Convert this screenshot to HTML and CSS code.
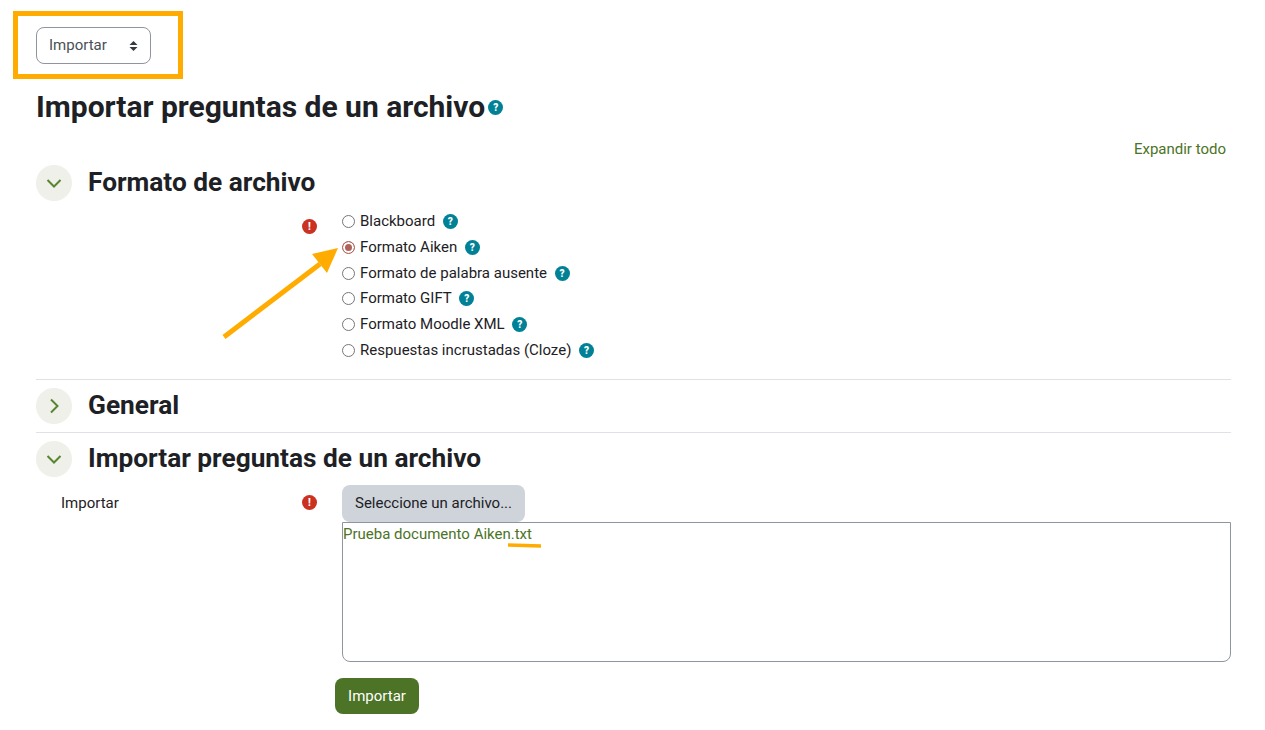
FILE: index.html
```html
<!DOCTYPE html>
<html>
<head>
    <title>Importar preguntas de un archivo</title>
    <meta name="viewport" content="width=device-width, initial-scale=1">
    <link rel="stylesheet" href="styles.css">
</head>
<body>
    <div class="page">
        <div class="select-box">
            <span>Importar</span>
            <svg class="select-arrows" width="9" height="10" viewBox="0 0 9 10"><path d="M4.5 0 L8.5 4 L0.5 4 Z M0.5 6 L8.5 6 L4.5 10 Z" fill="#343a40"/></svg>
        </div>

        <h1 class="page-title">Importar preguntas de un archivo<span class="help help-title">?</span></h1>

        <div class="expand-row"><a href="#">Expandir todo</a></div>

        <section class="section section-first">
            <div class="section-header">
                <span class="toggle"><svg width="16" height="16" viewBox="0 0 16 16"><path d="M1.5 5 L8 11.5 L14.500 5" fill="none" stroke="#5a8530" stroke-width="2"/></svg></span>
                <h2>Formato de archivo</h2>
            </div>
            <div class="form-row form-row-radios">
                <div class="form-label"></div>
                <div class="form-req"><span class="error-icon">!</span></div>
                <div class="radio-list">
                    <label class="radio-row"><input type="radio" name="format">Blackboard<span class="help">?</span></label>
                    <label class="radio-row"><input type="radio" name="format" checked>Formato Aiken<span class="help">?</span></label>
                    <label class="radio-row"><input type="radio" name="format">Formato de palabra ausente<span class="help">?</span></label>
                    <label class="radio-row"><input type="radio" name="format">Formato GIFT<span class="help">?</span></label>
                    <label class="radio-row"><input type="radio" name="format">Formato Moodle XML<span class="help">?</span></label>
                    <label class="radio-row"><input type="radio" name="format">Respuestas incrustadas (Cloze)<span class="help">?</span></label>
                </div>
            </div>
        </section>

        <section class="section">
            <div class="section-header">
                <span class="toggle"><svg width="16" height="16" viewBox="0 0 16 16"><path d="M5 1.500 L11.500 8 L5 14.500" fill="none" stroke="#5a8530" stroke-width="2"/></svg></span>
                <h2>General</h2>
            </div>
        </section>

        <section class="section">
            <div class="section-header">
                <span class="toggle"><svg width="16" height="16" viewBox="0 0 16 16"><path d="M1.5 5 L8 11.5 L14.500 5" fill="none" stroke="#5a8530" stroke-width="2"/></svg></span>
                <h2>Importar preguntas de un archivo</h2>
            </div>
            <div class="form-row form-row-file">
                <div class="form-label">Importar</div>
                <div class="form-req"><span class="error-icon">!</span></div>
                <div class="file-field">
                    <button class="btn-file" type="button">Seleccione un archivo...</button>
                    <div class="file-box"><a href="#">Prueba documento Aiken.txt</a></div>
                </div>
            </div>
        </section>

        <div class="submit-row">
            <button class="btn-submit" type="button">Importar</button>
        </div>
    </div>

    <!-- orange marks drawn over the screenshot -->
    <div class="mark-box"></div>
    <svg class="mark-arrow" width="130" height="105" viewBox="0 0 130 105"><path d="M4 97 L100 24" stroke="#ffab00" stroke-width="5" fill="none"/><path d="M118 8 L92 14 L107 33 Z" fill="#ffab00"/></svg>
    <svg class="mark-underline" width="34" height="6" viewBox="0 0 34 6"><path d="M0 2 L33 3" stroke="#ffab00" stroke-width="3.500" fill="none"/></svg>
</body>
</html>
```

FILE: styles.css
```css
body {
    margin: 0;
    font-family: Roboto, "Liberation Sans", sans-serif;
    font-size: 15px;
    line-height: 22.5px;
    color: #1d2125;
    background-color: #fff;
}
a {
    color: #4c7326;
    text-decoration: none;
}
.page {
    padding: 27px 34px 16px 36px;
}
.select-box {
    display: flex;
    justify-content: space-between;
    align-items: center;
    box-sizing: border-box;
    width: 115px;
    height: 37px;
    padding: 0 12px 0 12px;
    border: 1px solid #8f959e;
    border-radius: 8px;
    color: #495057;
}
.page-title {
    display: flex;
    align-items: center;
    margin: 26px 0 0;
    font-size: 30px;
    line-height: 34px;
    font-weight: 700;
}
.help {
    display: inline-block;
    width: 15px;
    height: 15px;
    margin-left: 7.6px;
    border-radius: 50%;
    background-color: #008196;
    color: #fff;
    font-size: 10px;
    font-weight: 900;
    line-height: 15px;
    text-align: center;
}
.help-title {
    margin-left: 3px;
}
.expand-row {
    margin-top: 14px;
    padding-right: 5px;
    text-align: right;
}
.section {
    border-top: 1px solid #dee2e6;
    padding-top: 8px;
}
.section-first {
    border-top: none;
    padding-top: 0;
    margin-top: 4px;
    padding-bottom: 15.7px;
}
.section-header {
    display: flex;
    align-items: center;
    gap: 16px;
    height: 36px;
    margin-bottom: 8px;
}
.section-header h2 {
    margin: 0 0 2px;
    font-size: 26.25px;
    line-height: 34px;
    font-weight: 700;
}
.toggle {
    display: flex;
    align-items: center;
    justify-content: center;
    width: 36px;
    height: 36px;
    border-radius: 50%;
    background-color: #eef0e9;
}
.form-row {
    display: grid;
    grid-template-columns: 241px 40px 1fr;
    padding-left: 25px;
}
.form-row-radios {
    padding-top: 0.3px;
}
.form-req {
    padding-top: 10px;
}
.form-row-file .form-label {
    padding-top: 7px;
}
.error-icon {
    display: block;
    width: 15px;
    height: 15px;
    border-radius: 50%;
    background-color: #ca3120;
    color: #fff;
    font-size: 10px;
    font-weight: 900;
    line-height: 15px;
    text-align: center;
}
.radio-list {
    display: flex;
    flex-direction: column;
}
.radio-row {
    display: flex;
    align-items: center;
    height: 25.7px;
}
.radio-row input {
    appearance: none;
    box-sizing: border-box;
    width: 13px;
    height: 13px;
    margin: 0 5px 0 0;
    border: 1px solid #767676;
    border-radius: 50%;
}
.radio-row input:checked {
    border-color: #b0625a;
    background-color: #b0625a;
    box-shadow: inset 0 0 0 2px #fff;
}
.file-field {
    display: flex;
    flex-direction: column;
    align-items: flex-start;
}
.btn-file {
    box-sizing: border-box;
    width: 183px;
    height: 37px;
    border: none;
    border-radius: 8px;
    background-color: #ced4da;
    color: #1d2125;
    font: inherit;
}
.file-box {
    box-sizing: border-box;
    width: 100%;
    height: 140px;
    padding: 0;
    border: 1px solid #8f959e;
    border-radius: 0 0 8px 8px;
}
.submit-row {
    margin-top: 16px;
    padding-left: 299px;
}
.btn-submit {
    box-sizing: border-box;
    width: 84px;
    height: 36px;
    padding: 1px 0 0;
    border: none;
    border-radius: 8px;
    background-color: #4c7326;
    color: #fff;
    font: inherit;
}
.mark-box {
    position: absolute;
    left: 13px;
    top: 11px;
    box-sizing: border-box;
    width: 170px;
    height: 68px;
    border: 5px solid #ffab00;
}
.mark-arrow {
    position: absolute;
    left: 220px;
    top: 240px;
}
.mark-underline {
    position: absolute;
    left: 508px;
    top: 543px;
}
```
